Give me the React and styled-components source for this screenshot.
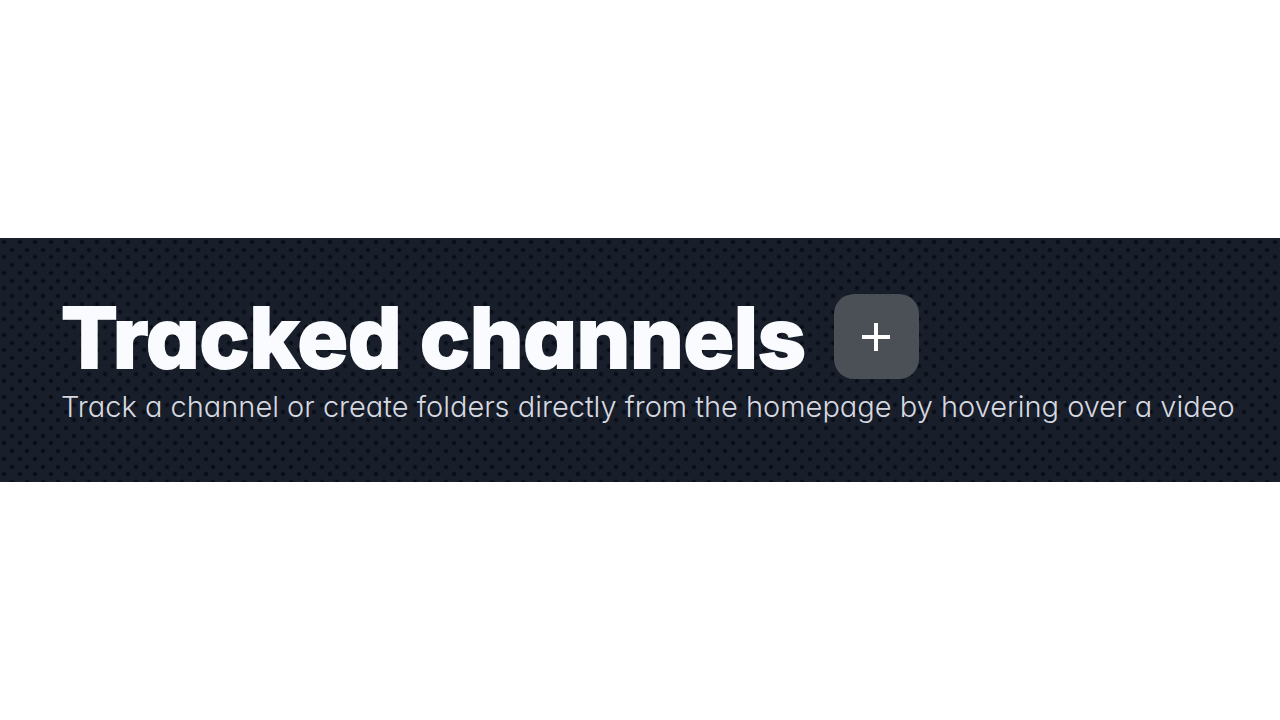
import React from "react";
import styled, { createGlobalStyle } from "styled-components";
import { Plus } from "lucide-react";

const GlobalStyle = createGlobalStyle`
  * { box-sizing: border-box; }
  body { margin: 0; background: #fff; font-family: Inter, "Liberation Sans", sans-serif; font-feature-settings: "cv11" 1; }
`;

const Page = styled.main`
  min-height: 100vh;
  display: flex;
  flex-direction: column;
  justify-content: center;
`;

const dot = (x, y) =>
  `radial-gradient(circle at ${x}px ${y}px, #070d16 1px, transparent 3px)`;

const Banner = styled.header`
  padding: 56px 32px 56px 61px;
  background-color: #181e2a;
  background-image: ${[
    dot(4, 4), dot(20, 4), dot(4, 19), dot(20, 19),
    dot(12, 12), dot(27, 12), dot(12, 27), dot(27, 27),
  ].join(", ")};
  background-size: 31px 31px;
`;

const TitleRow = styled.div`
  display: flex;
  align-items: flex-end;
  gap: 28px;
`;

const Title = styled.h1`
  margin: 0;
  color: #fafbfe;
  font-size: 84px;
  font-weight: 800;
  line-height: 82px;
  white-space: nowrap;
  -webkit-text-stroke: 2px #fafbfe;
`;

const AddButton = styled.button`
  display: flex;
  align-items: center;
  justify-content: center;
  flex: none;
  width: 85px;
  height: 85px;
  padding: 0;
  border: 0;
  border-radius: 20px;
  background: #4b5057;
  color: #fff;
  cursor: pointer;
`;

const Subtitle = styled.p`
  margin: 8px 0 0;
  color: #d6d9e0;
  font-size: 29px;
  font-weight: 300;
  line-height: 39px;
  white-space: nowrap;
`;

export default function App() {
  return (
    <>
      <GlobalStyle />
      <Page>
        <Banner>
          <TitleRow>
            <Title>Tracked channels</Title>
            <AddButton type="button" aria-label="Add channel">
              <Plus size={48} strokeWidth={2} strokeLinecap="butt" />
            </AddButton>
          </TitleRow>
          <Subtitle>
            Track a channel or create folders directly from the homepage by hovering over a video
          </Subtitle>
        </Banner>
      </Page>
    </>
  );
}
